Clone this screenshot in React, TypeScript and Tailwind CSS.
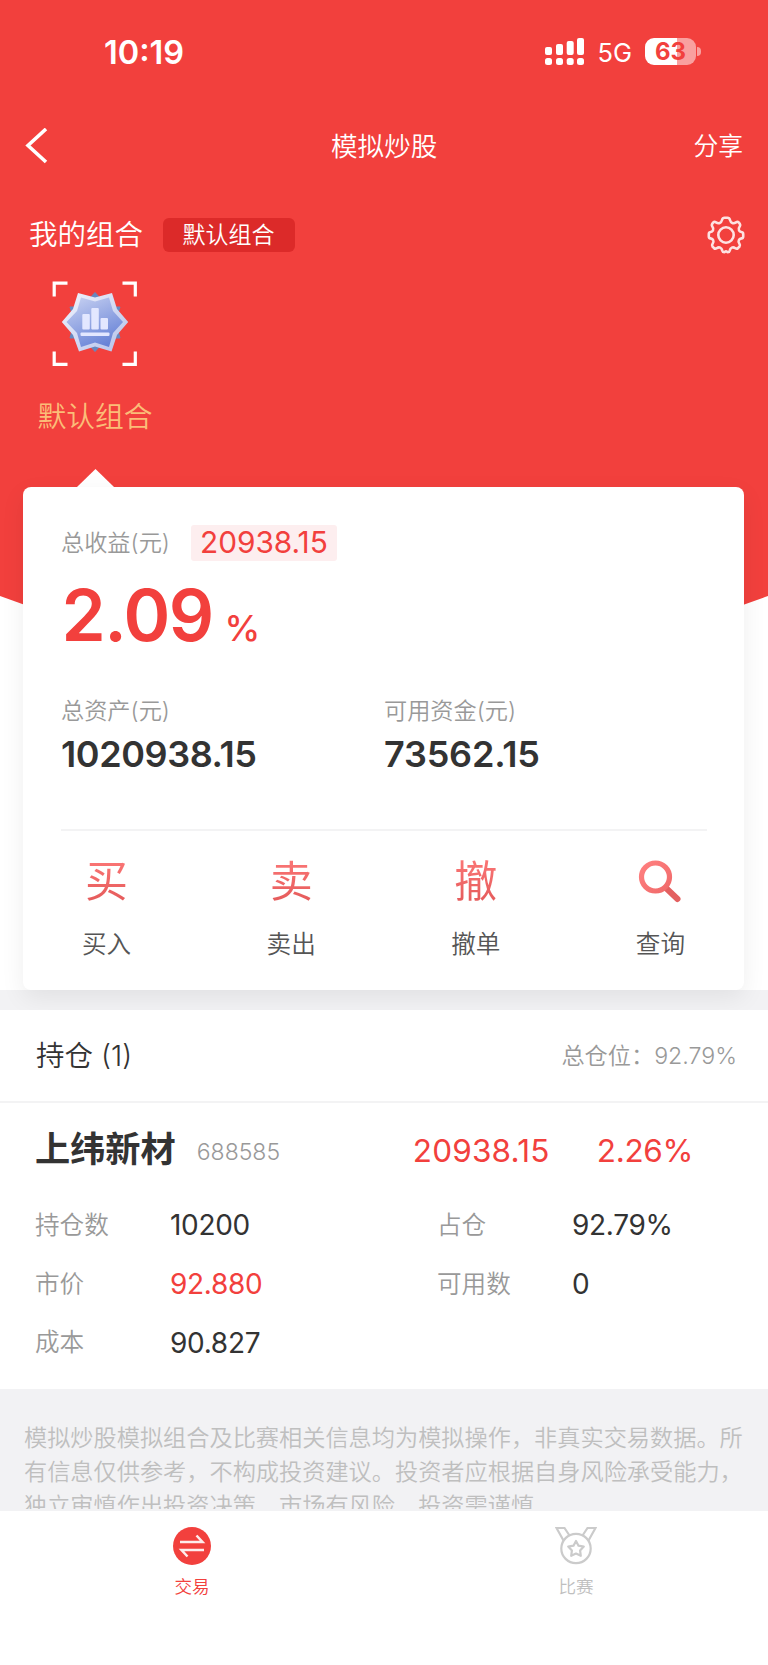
import clsx from "clsx";

interface IHoldingField {
  label: string;
  value: string;
  highlight?: boolean;
}

const leftFields: IHoldingField[] = [
  { label: "持仓数", value: "10200" },
  { label: "市价", value: "92.880", highlight: true },
  { label: "成本", value: "90.827" },
];

const rightFields: IHoldingField[] = [
  { label: "占仓", value: "92.79%" },
  { label: "可用数", value: "0" },
];

const actions = [
  { glyph: "买", label: "买入" },
  { glyph: "卖", label: "卖出" },
  { glyph: "撤", label: "撤单" },
  { glyph: "", label: "查询" },
];

const SignalIcon = () => (
  <svg width="39" height="27" viewBox="0 0 39 27" fill="#fff">
    <rect x="0" y="9" width="7" height="8" rx="2" />
    <rect x="11" y="6" width="7" height="11" rx="2" />
    <rect x="21.7" y="3" width="7" height="14" rx="2" />
    <rect x="32" y="0" width="7" height="17" rx="2" />
    <rect x="0" y="20" width="7" height="7" rx="2.5" />
    <rect x="11" y="20" width="7" height="7" rx="2.5" />
    <rect x="21.7" y="20" width="7" height="7" rx="2.5" />
    <rect x="32" y="20" width="7" height="7" rx="2.5" />
  </svg>
);

const GearIcon = () => (
  <svg width="38" height="38" viewBox="0 0 38 38" fill="none" stroke="#fff" strokeOpacity="0.85" strokeWidth="2.6" strokeLinejoin="round">
    <path d="M15 4Q15.600 1.800 17.500 1.800H20.500Q22.400 1.800 23 4Q23.600 6.400 25.300 7Q27 7.600 29 6.300Q30.600 5.300 31.700 6.400Q33.900 8.700 32.800 10.300Q31.200 12.400 32 14.300Q32.700 15.600 34.500 16Q36.200 16.300 36.200 18V20.400Q36.200 22.100 34.500 22.400Q32.300 22.800 31.700 24.400Q31 26 32.500 27.900Q33.600 29.400 32.600 30.500L30.900 32.200Q29.800 33.200 28.300 32.200Q26.500 30.900 24.800 31.600Q23.200 32.300 22.700 34.600Q22.300 36.200 20.800 36.200Q20.300 36.200 19.900 35.700Q19 34.700 18.100 35.700Q17.700 36.200 17.200 36.200Q15.700 36.200 15.300 34.600Q14.800 32.300 13.200 31.600Q11.500 30.900 9.700 32.200Q8.200 33.200 7.100 32.200L5.400 30.500Q4.400 29.400 5.500 27.900Q7 26 6.300 24.400Q5.700 22.800 3.500 22.400Q1.800 22.100 1.800 20.400V18Q1.800 16.300 3.500 16Q5.300 15.600 6 14.300Q6.800 12.400 5.200 10.300Q4.100 8.700 6.300 6.400Q7.400 5.300 9 6.300Q11 7.600 12.700 7Q14.400 6.400 15 4Z" />
    <circle cx="19" cy="19" r="7.700" />
  </svg>
);

const PortfolioIcon = () => (
  <svg width="86" height="86" viewBox="0 0 86 86" fill="none">
    <defs>
      <linearGradient id="medal" x1="0.2" y1="0" x2="0.7" y2="1">
        <stop offset="0" stopColor="#c3cdf0" />
        <stop offset="1" stopColor="#6480d6" />
      </linearGradient>
      <linearGradient id="medalEdge" x1="0" y1="0" x2="1" y2="1">
        <stop offset="0" stopColor="#f3f5fd" />
        <stop offset="1" stopColor="#b3c0ea" />
      </linearGradient>
    </defs>
    <path d="M15.500 2.200H2.200V15.500M70.500 2.200H83.300V15.500M15.500 83.300H2.200V70.500M70.500 83.300H83.300V70.500" stroke="#fff" strokeWidth="3.200" />
    <path d="M43 11.500L48 17H38ZM18 26H24L20 32ZM68 26H62L66 32ZM18 57H24L20 50ZM68 57H62L66 50ZM43 70.500L48 65H38Z" fill="#6688c0" stroke="#6688c0" />
    <path d="M26 12L43 16.500L60 12L65 28L76.200 41L65 54L59.500 70.500L43 65.500L27 70.500L21 54L9.800 41L21 28Z" fill="url(#medalEdge)" />
    <path d="M29 16.500L43 20.500L57 16.500L61 30L71 41L61 52L57 66L43 61.500L29 66L25 52L14.500 41L25 30Z" fill="url(#medal)" />
    <g fill="#e3e7ff">
      <rect x="30.300" y="33" width="7.500" height="15.500" rx="1" />
      <rect x="39.300" y="27" width="7.500" height="21.500" rx="1" />
      <rect x="48.500" y="37" width="7.500" height="11.500" rx="1" />
      <rect x="28.500" y="51.500" width="29" height="3.400" rx="1" />
    </g>
  </svg>
);

const QueryIcon = () => (
  <svg width="44" height="44" viewBox="0 0 44 44" fill="none" strokeLinecap="round">
    <defs>
      <linearGradient id="query" x1="0" y1="0" x2="1" y2="1">
        <stop offset="0" stopColor="#ff8080" />
        <stop offset="1" stopColor="#f06a6a" />
      </linearGradient>
    </defs>
    <path d="M28.500 29.500L39.500 40" stroke="#e36060" strokeWidth="6" />
    <circle cx="17.500" cy="18" r="14" stroke="url(#query)" strokeWidth="5.200" />
  </svg>
);

const TradeIcon = () => (
  <svg width="40" height="40" viewBox="0 0 40 40" fill="none">
    <circle cx="20" cy="20" r="19" fill="#f2403d" />
    <path d="M8 16H30.500L24.500 9.500M32 24H9.500L15.500 30.500" stroke="#fff" strokeOpacity="0.9" strokeWidth="2.500" />
  </svg>
);

const MedalIcon = () => (
  <svg width="42" height="40" viewBox="0 0 42 40" fill="none" stroke="#cbcbcb" strokeWidth="2.200">
    <path d="M8.500 14.500L1.500 2H9.500L14.500 9.500M33.500 14.500L40.500 2H32.500L27.500 9.500" />
    <circle cx="21" cy="22.500" r="14.700" />
    <path d="M21 15L23.500 19.700L28.800 20.600L25.100 24.500L25.800 29.800L21 27.500L16.200 29.800L16.900 24.500L13.200 20.600L18.500 19.700Z" strokeLinejoin="round" />
  </svg>
);

const StatusBar = () => (
  <div className="flex h-[104px] items-center justify-between pl-[104px] pr-[67px]">
    <span className="mt-[3px] text-[32.500px] font-semibold leading-none">10:19</span>
    <div className="-mt-px flex items-center">
      <SignalIcon />
      <span className="ml-[13px] mt-[3px] text-[25.500px] leading-none">5G</span>
      <div className="ml-[13px] flex h-[27px] w-[51px] items-center justify-center rounded-[9px] bg-[linear-gradient(90deg,#fff_63%,#f9a09f_63%)] text-[24px] font-bold leading-none text-[#f2403d]">
        63
      </div>
      <div className="ml-px h-[9px] w-[4px] rounded-r-full bg-[#f9a09f]" />
    </div>
  </div>
);

const Field = ({ label, value, highlight }: IHoldingField) => (
  <div className="flex h-[58.700px] items-center">
    <span className="w-[135px] text-[24.600px] font-[350] text-[#999]">{label}</span>
    <span className={clsx("text-[28px] tracking-[-0.3px]", highlight ? "text-[#f2403d]" : "text-[#333]")}>{value}</span>
  </div>
);

const App = () => {
  return (
    <div className="relative flex h-[1665px] w-[768px] flex-col overflow-hidden bg-white font-['Inter','Noto_Sans_CJK_SC',sans-serif] text-[#333]">
      {/* curved red backdrop */}
      <svg className="absolute left-0 top-0" width="768" height="680" viewBox="0 0 768 680">
        <path d="M0 0H768V596Q384 740 0 596Z" fill="#f2403d" />
      </svg>

      <header className="relative h-[487px] text-white">
        <StatusBar />

        <div className="flex h-[84px] items-center justify-between pl-[25px] pr-[25px]">
          <svg width="50" height="36" viewBox="0 0 50 36" fill="none" stroke="#fff" strokeWidth="3.600">
            <path d="M21 1L3 17.500L21 34" />
          </svg>
          <h1 className="mt-px text-[26.600px] font-[350]">模拟炒股</h1>
          <span className="mt-[2px] text-[24.800px] font-[350]">分享</span>
        </div>

        <div className="flex h-[93px] items-center pl-[29px] pr-[23px]">
          <span className="mt-px text-[28.500px] font-[350]">我的组合</span>
          <span className="ml-5 flex h-[34px] w-[132px] items-center justify-center rounded-md bg-[#dc2a29] pt-px pr-px text-[23px] font-[350]">
            默认组合
          </span>
          <span className="ml-auto">
            <GearIcon />
          </span>
        </div>

        <div className="ml-[23px] flex w-[143px] flex-col items-center">
          <PortfolioIcon />
          <span className="ml-px mt-[28px] text-[28.800px] font-[350] text-[#fbbd78]">默认组合</span>
        </div>

        <div className="absolute bottom-0 left-[77px] h-[18px] w-[37px] bg-white [clip-path:polygon(50%_0,100%_100%,0_100%)]" />
      </header>

      <main className="relative">
        <section className="relative z-10 ml-[23px] mr-6 h-[503px] rounded-lg bg-white shadow-[0_8px_24px_rgba(0,0,0,0.07)]">
          <div className="flex h-[111px] items-center pl-[38px]">
            <span className="mt-px text-[23.200px] font-[350] text-[#999]">总收益(元)</span>
            <span className="ml-[21px] flex h-[36px] w-[146px] items-center justify-center rounded-[3px] bg-[#fdeeef] text-[29.800px] text-[#f2403d]">
              20938.15
            </span>
          </div>

          <div className="flex h-[44px] items-end pl-[38.500px] leading-[0.75] text-[#f2403d]">
            <span className="w-[163px] text-[71px] font-semibold tracking-[-1.500px]">2.09</span>
            <span className="text-[36px] font-medium">%</span>
          </div>

          <div className="flex h-[187px] pl-[38px] pt-[51px]">
            <div className="w-[323px]">
              <p className="text-[23.200px] font-[350] leading-[36px] text-[#999]">总资产(元)</p>
              <p className="mt-[3px] text-[36px] font-semibold leading-[44px] tracking-[-0.400px]">1020938.15</p>
            </div>
            <div>
              <p className="text-[23.200px] font-[350] leading-[36px] text-[#999]">可用资金(元)</p>
              <p className="mt-[3px] text-[36px] font-semibold leading-[44px] tracking-[-0.200px]">73562.15</p>
            </div>
          </div>

          <div className="mx-[37.500px] h-[2px] bg-[#f3f3f4]" />

          <div className="flex justify-between px-[59px] pt-[28px]">
            {actions.map(({ glyph, label }) => (
              <div key={label} className="flex flex-col items-center">
                <div className="flex h-[44px] items-center">
                  {glyph ? (
                    <span className="bg-linear-to-b from-[#ff7b7b] to-[#e05555] bg-clip-text text-[43px] leading-[60px] text-transparent">
                      {glyph}
                    </span>
                  ) : (
                    <QueryIcon />
                  )}
                </div>
                <span className="mt-[23px] text-[24.600px] font-[350] leading-[36px] text-[#555]">{label}</span>
              </div>
            ))}
          </div>
        </section>

        <div className="h-5 bg-[#f2f2f4]" />

        <section className="relative z-20 h-[379px] bg-white">
          <div className="flex h-[93px] items-center justify-between border-b-2 border-[#f3f3f4] pl-[36px] pr-[31px]">
            <h2 className="mt-px text-[28.500px] font-[350]">持仓 (1)</h2>
            <span className="mt-px text-[23.200px] font-[350] text-[#999]">总仓位：92.79%</span>
          </div>

          <div className="flex h-[93px] items-center pl-[35px]">
            <span className="-mt-px text-[35.200px] font-bold">上纬新材</span>
            <span className="ml-[21px] mt-[6px] w-[216px] text-[23px] font-[350] text-[#999]">688585</span>
            <span className="mt-[3px] w-[184px] text-[31.500px] tracking-[0.200px] text-[#f2403d]">20938.15</span>
            <span className="mt-[3px] text-[31.500px] tracking-[-0.300px] text-[#f2403d]">2.26%</span>
          </div>

          <div className="flex pl-[35px]">
            <div className="w-[402px]">
              {leftFields.map((field) => (
                <Field key={field.label} {...field} />
              ))}
            </div>
            <div>
              {rightFields.map((field) => (
                <Field key={field.label} {...field} />
              ))}
            </div>
          </div>
        </section>

        <div className="h-[122px] overflow-hidden bg-[#f2f2f4] pl-6 pt-8">
          <p className="h-[88px] w-[722px] overflow-hidden text-[23.200px] font-[350] leading-[34px] text-[#bfbfbf]">
            模拟炒股模拟组合及比赛相关信息均为模拟操作，非真实交易数据。所
            <br />
            有信息仅供参考，不构成投资建议。投资者应根据自身风险承受能力，
            <br />
            独立审慎作出投资决策，市场有风险，投资需谨慎
          </p>
        </div>
      </main>

      <nav className="grid flex-1 grid-cols-2 bg-white pt-[15px] text-[17.600px] font-[350]">
        <div className="flex flex-col items-center text-[#f2403d]">
          <TradeIcon />
          <span className="mt-[8px]">交易</span>
        </div>
        <div className="flex flex-col items-center text-[#bfbfbf]">
          <MedalIcon />
          <span className="mt-[8px]">比赛</span>
        </div>
      </nav>
    </div>
  );
};

export default App;
